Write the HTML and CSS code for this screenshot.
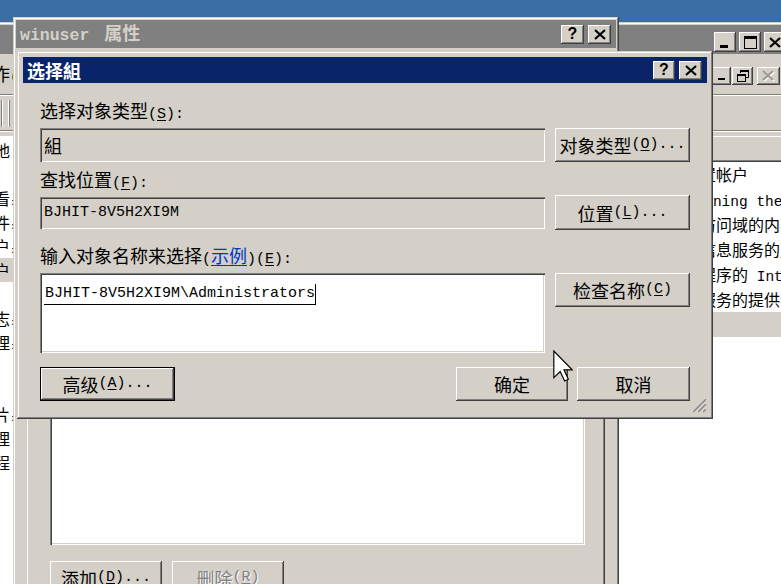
FILE: index.html
```html
<!DOCTYPE html>
<html lang="zh-CN">
<head>
    <meta charset="UTF-8">
    <meta name="viewport" content="width=device-width, initial-scale=1.0">
    <title>选择組</title>
    <link rel="stylesheet" href="styles.css">
</head>
<body>
<div class="desktop">

    <!-- console window behind the dialogs -->
    <div class="win mmc">
        <div class="title mmc-title">
            <span class="caps">
                <span class="cap"><svg width="12" height="12" viewBox="0 0 12 12"><rect x="1" y="9" width="8" height="3" fill="#000"/></svg></span>
                <span class="cap"><svg width="13" height="13" viewBox="0 0 13 13"><rect x="0.5" y="0.5" width="12" height="12" fill="none" stroke="#000"/><rect x="0" y="0" width="13" height="3" fill="#000"/></svg></span>
                <span class="cap"><svg width="12" height="11" viewBox="0 0 12 11"><path d="M1 1L11 10M11 1L1 10" stroke="#000" stroke-width="2.2"/></svg></span>
            </span>
        </div>
        <div class="menubar">
            <span class="menu-item first">操作<span class="m">(<u>A</u>)</span></span>
            <span class="menu-item">查看<span class="m">(<u>V</u>)</span></span>
            <span class="menu-item">窗口<span class="m">(<u>W</u>)</span></span>
            <span class="mdi-caps">
                <span class="cap mdi w19"><svg width="10" height="10" viewBox="0 0 10 10"><rect x="1" y="7" width="7" height="2" fill="#000"/></svg></span>
                <span class="cap mdi w21"><svg width="12" height="12" viewBox="0 0 12 12"><path d="M3.5 3V0.5H11.5V7.5H9" fill="none" stroke="#000"/><rect x="3" y="0" width="9" height="2" fill="#000"/><rect x="0.5" y="4.5" width="8" height="7" fill="#d4d0c8" stroke="#000"/><rect x="0" y="4" width="9" height="2" fill="#000"/></svg></span>
                <span class="cap mdi w23 gap"><svg width="14" height="12" viewBox="0 0 14 12"><path d="M2 2L12 11M12 2L2 11" stroke="#fff" stroke-width="2"/><path d="M1 1L11 10M11 1L1 10" stroke="#9a978f" stroke-width="2"/></svg></span>
            </span>
        </div>
        <div class="etch"></div>
        <div class="toolbar">
            <span class="tb-line"></span>
            <span class="tb-line second"></span>
        </div>
        <div class="etch low"></div>
        <div class="panes">
            <div class="tree">
                <div class="tree-row">本地</div>
                <div class="tree-row"></div>
                <div class="tree-row">查看<span class="c">:</span></div>
                <div class="tree-row">文件<span class="c">:</span></div>
                <div class="tree-row">用户<span class="c">:</span></div>
                <div class="tree-row sel">账户</div>
                <div class="tree-row"></div>
                <div class="tree-row">日志<span class="c">:</span></div>
                <div class="tree-row">管理<span class="c">:</span></div>
                <div class="tree-row"></div>
                <div class="tree-row">存<span class="c">:</span></div>
                <div class="tree-row">卡片<span class="c">:</span></div>
                <div class="tree-row">处理</div>
                <div class="tree-row">进程</div>
            </div>
            <div class="list">
                <div class="list-head"></div>
                <div class="list-row">域的内置帐户</div>
                <div class="list-row lat"><span class="m">Maintaining the domain</span></div>
                <div class="list-row">户可以访问域的内容</div>
                <div class="list-row">持远程信息服务的用户</div>
                <div class="list-row">的应用程序的<span class="m"> Internet</span></div>
                <div class="list-row">程终端服务的提供者</div>
                <div class="list-row sel"></div>
            </div>
        </div>
    </div>

    <!-- group properties -->
    <div class="win props">
        <div class="title">
            <span class="t"><span class="mb">winuser</span><span class="cjk-t">属性</span></span>
            <span class="caps">
                <span class="cap w23">?</span>
                <span class="cap w23"><svg width="12" height="11" viewBox="0 0 12 11"><path d="M1 1L11 10M11 1L1 10" stroke="#000" stroke-width="2.2"/></svg></span>
            </span>
        </div>
        <div class="props-body">
            <div class="tabs">
                <span class="tab">常规</span>
            </div>
            <div class="tab-pane">
                <div class="lbl">成员<span class="m">(<u>M</u>):</span></div>
                <div class="members"></div>
                <div class="pane-btns">
                    <div class="btn w112">添加<span class="m">(<u>D</u>)...</span></div>
                    <div class="btn w112 off">删除<span class="m">(<u>R</u>)</span></div>
                </div>
            </div>
        </div>
    </div>

    <!-- select groups dialog -->
    <div class="win pick">
        <div class="title active">
            <span class="t">选择組</span>
            <span class="caps">
                <span class="cap">?</span>
                <span class="cap w23"><svg width="12" height="11" viewBox="0 0 12 11"><path d="M1 1L11 10M11 1L1 10" stroke="#000" stroke-width="2.2"/></svg></span>
            </span>
        </div>
        <div class="pick-body">
            <div class="lbl">选择对象类型<span class="m">(<u>S</u>):</span></div>
            <div class="row r1">
                <div class="field">組</div>
                <div class="btn">对象类型<span class="m">(<u>O</u>)...</span></div>
            </div>

            <div class="lbl l2">查找位置<span class="m">(<u>F</u>):</span></div>
            <div class="row r2">
                <div class="field short"><span class="m">BJHIT-8V5H2XI9M</span></div>
                <div class="btn tall">位置<span class="m">(<u>L</u>)...</span></div>
            </div>

            <div class="lbl l3">输入对象名称来选择<span class="m">(</span><span class="link">示例</span><span class="m">)(<u>E</u>):</span></div>
            <div class="row r3">
                <div class="names"><span class="typed">BJHIT-8V5H2XI9M\Administrators</span></div>
                <div class="btn">检查名称<span class="m">(<u>C</u>)</span></div>
            </div>

            <div class="row r4">
                <div class="btn def">高级<span class="m">(<u>A</u>)...</span></div>
                <div class="btn ok">确定</div>
                <div class="btn cancel">取消</div>
            </div>
        </div>
        <svg class="grip-corner" width="17" height="17" viewBox="0 0 17 17">
            <path d="M16 2L2 16M16 7L7 16M16 12L12 16" stroke="#fff" stroke-width="1"/>
            <path d="M16 3L3 16M16 8L8 16M16 13L13 16" stroke="#808080" stroke-width="1.5"/>
        </svg>
    </div>

    <svg class="cursor" width="20" height="32" viewBox="0 0 12 19">
        <path d="M0.5 0.5V16.5L4.3 12.8L7 18.5L9.2 17.5L6.6 11.8H11.5Z" fill="#fff" stroke="#000" stroke-width="0.7" stroke-linejoin="miter"/>
    </svg>
</div>
</body>
</html>
```

FILE: styles.css
```css
* {
    margin: 0;
    padding: 0;
    box-sizing: border-box;
}
html, body {
    width: 100%;
    height: 100%;
    overflow: hidden;
}
body {
    background-color: #3a6ea5;
    font-family: "Noto Sans CJK SC", "Liberation Sans", sans-serif;
    font-size: 18px;
    line-height: 18px;
    color: #000;
}
.m {
    font-family: "Liberation Mono", monospace;
    font-size: 15px;
}
u {
    text-decoration: underline;
    text-underline-offset: 2px;
}

.desktop {
    position: relative;
    width: 781px;
    height: 584px;
    overflow: hidden;
}

/* classic window frame */
.win {
    position: absolute;
    display: flex;
    flex-direction: column;
    background-color: #d4d0c8;
    box-shadow: inset -1px -1px #404040, inset 1px 1px #d4d0c8, inset -2px -2px #808080, inset 2px 2px #fff;
}
.title {
    display: flex;
    align-items: center;
    justify-content: space-between;
    flex-shrink: 0;
    background-color: #808080;
    color: #d4d0c8;
    font-weight: bold;
    padding: 0 5px 0 4px;
    white-space: nowrap;
}
.title.active {
    background-color: #0a246a;
    color: #fff;
}
.mb {
    font-family: "Liberation Mono", monospace;
    font-size: 16.5px;
}
.cjk-t {
    margin-left: 15px;
}
.caps {
    display: flex;
    gap: 4px;
}
.cap {
    width: 22px;
    height: 19px;
    display: flex;
    align-items: center;
    justify-content: center;
    background-color: #d4d0c8;
    box-shadow: inset -1px -1px #404040, inset 1px 1px #fff, inset -2px -2px #808080, inset 2px 2px #d4d0c8;
    font-family: "Liberation Sans", sans-serif;
    font-size: 16px;
    font-weight: bold;
    color: #000;
}
.w19 { width: 19px; }
.w21 { width: 21px; }
.w23 { width: 23px; }

/* console window */
.mmc {
    left: -4px;
    top: 22px;
    width: 793px;
    height: 570px;
    padding: 3px;
}
.mmc-title {
    height: 29px;
    align-items: flex-end;
    justify-content: flex-end;
    padding: 0 0 2px 0;
}
.mmc-title .caps {
    gap: 3px;
}
.mmc-title .cap {
    height: 20px;
}
.menubar {
    display: flex;
    align-items: center;
    height: 36px;
    margin-top: 2px;
    padding-top: 3px;
    white-space: nowrap;
}
.menu-item {
    margin-right: 14px;
}
.menu-item.first {
    margin-left: -25px;
}
.mdi-caps {
    display: flex;
    gap: 1px;
    margin-left: auto;
    padding-right: 6px;
}
.cap.mdi {
    height: 18px;
}
.cap.mdi.gap {
    margin-left: 3px;
}
.etch {
    height: 2px;
    margin-top: 2px;
    border-top: 1px solid #808080;
    border-bottom: 1px solid #fff;
}
.etch.low {
    margin-top: 0;
    margin-bottom: 4px;
}
.toolbar {
    display: flex;
    align-items: center;
    height: 34px;
    padding-left: 2px;
}
.tb-line {
    width: 2px;
    height: 27px;
    border-left: 1px solid #808080;
    border-right: 1px solid #fff;
}
.tb-line.second {
    margin-left: 5px;
    border-left: 1px solid #fff;
    border-right: 1px solid #808080;
}
.panes {
    flex: 1;
    display: flex;
    min-height: 0;
}
.tree {
    width: 601px;
    flex-shrink: 0;
    background-color: #fff;
    padding-top: 2px;
    overflow: hidden;
}
.tree-row {
    height: 24px;
    line-height: 24px;
    font-size: 16px;
    margin-left: -21px;
    white-space: nowrap;
}
.tree-row.sel {
    background-color: #d4d0c8;
}
.c {
    font-size: 9px;
    font-family: "Liberation Mono", monospace;
}
.list {
    flex: 1;
    min-width: 0;
    overflow: hidden;
    background-color: #fff;
}
.list-head {
    height: 26px;
    background-color: #d4d0c8;
    box-shadow: inset -1px -1px #404040, inset 1px 1px #fff, inset -2px -2px #808080;
}
.list-row {
    height: 25px;
    line-height: 25px;
    font-size: 16px;
    padding-left: 52px;
    white-space: nowrap;
}
.list-row .m {
    font-size: 14.5px;
}
.list-row.sel {
    background-color: #d4d0c8;
}

/* properties dialog */
.props {
    left: 13px;
    top: 17px;
    width: 606px;
    height: 600px;
    padding: 3px;
}
.props .title {
    height: 28px;
}
.props-body {
    padding: 10px 11px 0;
}
.tabs {
    height: 26px;
    display: flex;
    align-items: flex-end;
}
.tab {
    height: 24px;
    padding: 3px 10px 0;
    font-size: 16px;
    box-shadow: inset 1px 1px #fff, inset -1px 0 #404040;
}
.tab-pane {
    height: 520px;
    padding: 14px 0 0 23px;
    box-shadow: inset -1px -1px #404040, inset 1px 1px #fff, inset -2px -2px #808080;
}
.members {
    width: 535px;
    height: 423px;
    margin-top: 6px;
    background-color: #fff;
    box-shadow: inset 1px 1px #808080, inset 2px 2px #404040, inset -1px -1px #fff, inset -2px -2px #d4d0c8;
}
.pane-btns {
    display: flex;
    gap: 10px;
    margin-top: 16px;
}

/* select groups dialog */
.pick {
    left: 17px;
    top: 51px;
    width: 696px;
    height: 368px;
    padding: 6px 6px 5px 6px;
}
.pick .title {
    height: 26px;
}
.pick-body {
    padding: 18px 17px 0;
}
.lbl {
    height: 18px;
    white-space: nowrap;
}
.lbl.l2 {
    margin-top: 8px;
}
.lbl.l3 {
    margin-top: 16px;
}
.link {
    color: #0033cc;
    text-decoration: underline;
    text-underline-offset: 2px;
}
.row {
    display: flex;
    align-items: flex-start;
    gap: 10px;
}
.row.r1 { margin-top: 9px; }
.row.r2 { margin-top: 7px; align-items: center; }
.row.r3 { margin-top: 9px; }
.row.r4 { margin-top: 14px; gap: 9px; }

.field {
    width: 505px;
    height: 34px;
    display: flex;
    align-items: center;
    padding-left: 4px;
    box-shadow: inset 1px 1px #808080, inset 2px 2px #404040, inset -1px -1px #fff, inset -2px -2px #d4d0c8;
}
.field.short {
    height: 32px;
}
.names {
    width: 505px;
    height: 80px;
    padding: 7px 4px;
    background-color: #fff;
    box-shadow: inset 1px 1px #808080, inset 2px 2px #404040, inset -1px -1px #fff, inset -2px -2px #d4d0c8;
}
.typed {
    display: inline-block;
    font-family: "Liberation Mono", monospace;
    font-size: 15px;
    line-height: 20px;
    padding-left: 1px;
    border-bottom: 1px solid #000;
    border-right: 1px solid #000;
}

.btn {
    width: 135px;
    height: 34px;
    display: flex;
    align-items: center;
    justify-content: center;
    white-space: nowrap;
    background-color: #d4d0c8;
    box-shadow: inset -1px -1px #404040, inset 1px 1px #fff, inset -2px -2px #808080, inset 2px 2px #d4d0c8;
}
.btn.tall {
    height: 35px;
}
.btn.def {
    box-shadow: inset 0 0 0 1px #000, inset -2px -2px #404040, inset 2px 2px #fff, inset -3px -3px #808080;
}
.btn.ok {
    width: 112px;
    margin-left: auto;
}
.btn.cancel {
    width: 113px;
}
.btn.w112 {
    width: 112px;
}
.btn.off {
    color: #808080;
    text-shadow: 1px 1px #fff;
}

.grip-corner {
    position: absolute;
    right: 6px;
    bottom: 6px;
}
.cursor {
    position: absolute;
    left: 553px;
    top: 350px;
}
```
